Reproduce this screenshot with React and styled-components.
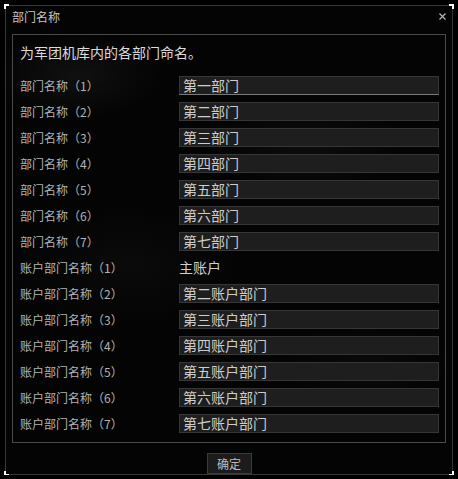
import React from "react";
import styled, { createGlobalStyle } from "styled-components";

const GlobalStyle = createGlobalStyle`
  html, body {
    margin: 0;
    padding: 0;
    background: #000;
  }
  body {
    font-family: "Noto Sans CJK SC", "Noto Sans", sans-serif;
  }
`;

const departments = ["第一部门", "第二部门", "第三部门", "第四部门", "第五部门", "第六部门", "第七部门"];
const accounts = ["主账户", "第二账户部门", "第三账户部门", "第四账户部门", "第五账户部门", "第六账户部门", "第七账户部门"];

function App() {
    const rows = [
        ...departments.map((name, i) => ({ label: `部门名称（${i + 1}）`, value: name, editable: true })),
        ...accounts.map((name, i) => ({ label: `账户部门名称（${i + 1}）`, value: name, editable: i > 0 })),
    ];

    return (
        <>
            <GlobalStyle />
            <Window>
                <Corner $pos="tl" />
                <Corner $pos="tr" />
                <Corner $pos="bl" />
                <Corner $pos="br" />
                <TitleBar>
                    <Title>部门名称</Title>
                    <Close>
                        <svg width="7" height="7" viewBox="0 0 7 7">
                            <path d="M0.5 0.5 L6.5 6.5 M6.5 0.5 L0.5 6.5" stroke="#b5b5b5" strokeWidth="1.2" />
                        </svg>
                    </Close>
                </TitleBar>
                <Panel>
                    <Heading>为军团机库内的各部门命名。</Heading>
                    {rows.map((row, idx) => (
                        <Row key={idx}>
                            <Label>{row.label}</Label>
                            {row.editable
                                ? <NameInput defaultValue={row.value} readOnly $active={idx === 0} />
                                : <Plain>{row.value}</Plain>}
                        </Row>
                    ))}
                </Panel>
                <Footer>
                    <OkButton>确定</OkButton>
                </Footer>
            </Window>
        </>
    );
}

const Window = styled.div`
    position: relative;
    box-sizing: border-box;
    margin: 5px 0 0 5px;
    width: 448px;
    height: 470px;
    padding: 0 6px;
    border: 1px solid #363636;
    display: flex;
    flex-direction: column;
    background:
        radial-gradient(ellipse 120px 60px at 70px 70px, rgba(60, 60, 60, 0.22), transparent 70%),
        radial-gradient(ellipse 140px 70px at 300px 140px, rgba(50, 50, 50, 0.18), transparent 70%),
        radial-gradient(ellipse 160px 80px at 120px 260px, rgba(45, 45, 45, 0.16), transparent 70%),
        radial-gradient(ellipse 120px 60px at 360px 360px, rgba(40, 40, 40, 0.15), transparent 70%),
        #040404;
`;

const cornerPlace = {
    tl: "top: -2px; left: -2px; border-top: 2px solid #fff; border-left: 2px solid #fff;",
    tr: "top: -2px; right: -2px; border-top: 2px solid #fff; border-right: 2px solid #fff;",
    bl: "bottom: -2px; left: -2px; border-bottom: 2px solid #fff; border-left: 2px solid #fff;",
    br: "bottom: -2px; right: -2px; border-bottom: 2px solid #fff; border-right: 2px solid #fff;",
};

const Corner = styled.span`
    position: absolute;
    width: 3px;
    height: 3px;
    ${(p) => cornerPlace[p.$pos]}
`;

const TitleBar = styled.div`
    height: 22px;
    display: flex;
    align-items: center;
    justify-content: space-between;
`;

const Title = styled.div`
    font-size: 12px;
    color: #c4c4c4;
    line-height: 22px;
`;

const Close = styled.div`
    width: 7px;
    height: 7px;
    display: flex;
    margin-right: 0px;
    margin-top: -2px;
`;

const Panel = styled.div`
    box-sizing: border-box;
    margin-top: 6px;
    height: 409px;
    border: 1px solid #4a4a4a;
    padding: 7px 5px 0 7px;
    display: flex;
    flex-direction: column;
`;

const Heading = styled.div`
    font-size: 14px;
    line-height: 20px;
    color: #dadada;
    margin-bottom: 10px;
`;

const Row = styled.div`
    height: 26px;
    display: grid;
    grid-template-columns: 159px 260px;
    align-items: center;
`;

const Label = styled.div`
    font-size: 12px;
    color: #b2b2b2;
    line-height: 16px;
    white-space: nowrap;
    padding-top: 2px;
`;

const NameInput = styled.input`
    box-sizing: border-box;
    width: 260px;
    height: 19px;
    margin: 0;
    padding: 0 0 0 3px;
    background: #1e1e1e;
    border: 1px solid #363636;
    border-bottom-color: ${(p) => (p.$active ? "#7a7a7a" : "#363636")};
    color: #cdcdcd;
    font-family: "Noto Sans CJK SC", "Noto Sans", sans-serif;
    font-size: 14px;
    line-height: 17px;
    outline: none;
`;

const Plain = styled.div`
    font-size: 14px;
    color: #cdcdcd;
    line-height: 19px;
`;

const Footer = styled.div`
    display: flex;
    justify-content: center;
    padding-top: 10px;
`;

const OkButton = styled.button`
    box-sizing: border-box;
    width: 45px;
    height: 21px;
    padding: 0;
    background: #1c1c1c;
    border: 1px solid #3a3a3a;
    color: #bcbcbc;
    font-family: "Noto Sans CJK SC", "Noto Sans", sans-serif;
    font-size: 12px;
    line-height: 19px;
    cursor: pointer;
`;

export default App;
